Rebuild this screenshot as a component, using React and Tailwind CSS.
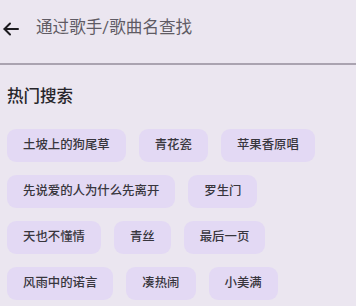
import React from 'react'

const hotWords = [
    '土坡上的狗尾草', '青花瓷', '苹果香原唱',
    '先说爱的人为什么先离开', '罗生门',
    '天也不懂情', '青丝', '最后一页',
    '风雨中的诺言', '凑热闹', '小美满',
]

function App() {
    return (
        <div className="w-[356px] h-[306px] overflow-hidden bg-[#ebe6f0] font-['Roboto','Noto_Sans_CJK_SC',sans-serif]">
            {/* Search bar */}
            <div className="h-[65px] border-b-2 border-[#aaa3b0] flex items-center pb-[6px]">
                <svg className="ml-[3px]" width="16" height="16" viewBox="0 0 16 16" fill="none" stroke="#1c1b1f" strokeWidth="2" strokeLinecap="round" strokeLinejoin="round">
                    <path d="M15 8H1.5" />
                    <path d="M7 2.5L1.5 8l5.5 5.5" />
                </svg>
                <span className="ml-[17px] text-[16.6px] text-[#5f5b64]">通过歌手/歌曲名查找</span>
            </div>

            <div className="px-[7px]">
                <h3 className="mt-[20px] text-[16.5px] leading-[24px] font-medium text-[#26252a]">热门搜索</h3>

                {/* Hot words */}
                <div className="mt-[20px] flex flex-wrap gap-x-[13px] gap-y-[13px]">
                    {hotWords.map((word) => (
                        <span key={word} className="h-[33px] px-[16px] flex items-center rounded-[9px] bg-[#e3d9f4] text-[12.4px] text-[#38363d] font-medium">
                            {word}
                        </span>
                    ))}
                </div>
            </div>
        </div>
    )
}

export default App
